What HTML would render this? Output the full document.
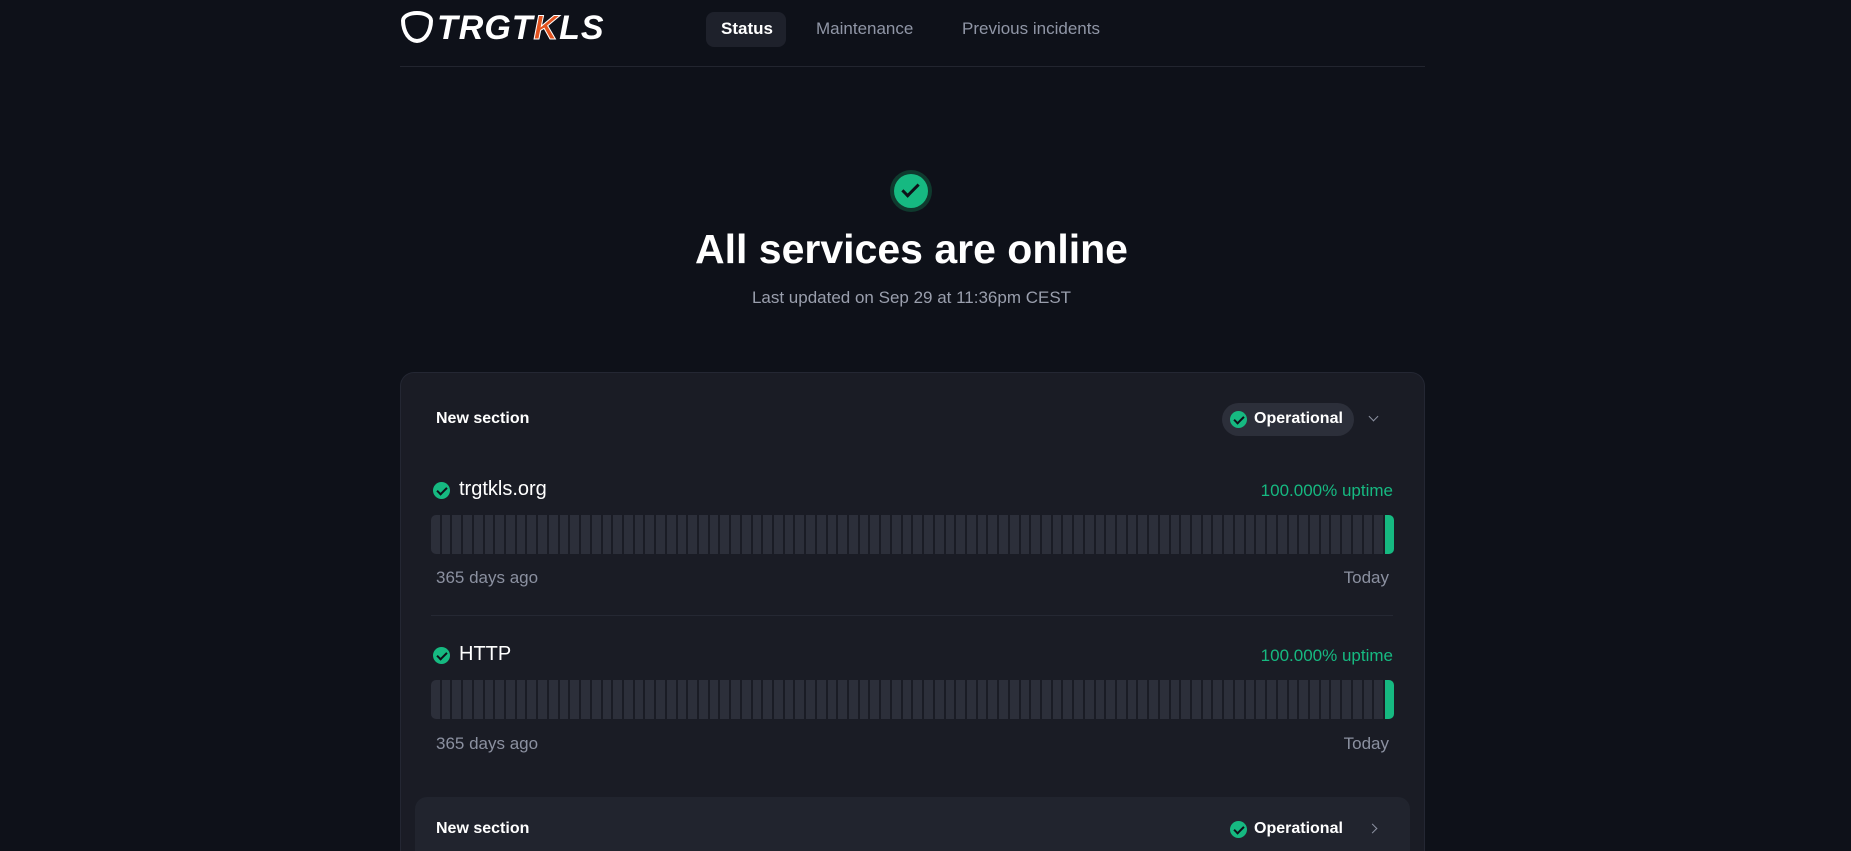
<!DOCTYPE html>
<html><head><meta charset="utf-8"><style>
*{box-sizing:border-box;margin:0;padding:0}
html,body{width:1851px;height:851px;overflow:hidden}
body{background:#0e1119;font-family:"Liberation Sans",sans-serif;color:#fff;position:relative}
.abs{position:absolute}
.nav a{position:absolute;font-size:17px;color:#9096a6;top:19px}
.pill{left:706px;top:12px;width:80px;height:35px;background:#1e212b;border-radius:8px}
.line{left:400px;top:66px;width:1025px;height:1px;background:#22252f}
.card{left:400px;top:372px;width:1025px;height:479px;background:#1a1c25;border:1px solid #242733;border-bottom:none;border-radius:14px 14px 0 0}
.bar{position:absolute;left:431px;width:962px;height:39px;display:flex;gap:2px}
.bar i{flex:1;background:#2c2f3a}
.bar i:first-child{border-radius:5px 0 0 5px}
.bar i:last-child{background:#16b981;border-radius:0 5px 5px 0}
.gray{color:#8b90a0;font-size:17px}
.green{color:#16b981;font-size:17px}
.ic{position:absolute;width:17px;height:17px;border-radius:50%;background:#16b981}
.ic::after{content:"";position:absolute;left:5.5px;top:3px;width:4px;height:8px;border:solid #0e1119;border-width:0 2px 2px 0;transform:rotate(45deg)}
</style></head><body>
<div class="abs" style="left:401px;top:9px;font:italic 900 34px 'Liberation Sans',sans-serif;letter-spacing:1px;color:#fff;white-space:nowrap">
<span style="display:inline-block;width:32px;height:32px;border:4px solid #fff;border-radius:50% 50% 50% 50%/30% 30% 70% 70%;vertical-align:-4px;margin-right:4px"></span>TRGT<span style="color:#e2531f;-webkit-text-stroke:1px #fff">K</span>LS</div>
<div class="abs pill"></div>
<div class="nav"><a style="left:721px;color:#fff;font-weight:bold">Status</a><a style="left:816px">Maintenance</a><a style="left:962px">Previous incidents</a></div>
<div class="abs line"></div>
<div class="abs" style="left:890px;top:170px;width:42px;height:42px;border-radius:50%;background:#0f3a2e"></div>
<div class="abs" style="left:894px;top:174px;width:34px;height:34px;border-radius:50%;background:#16b981"></div>
<div class="abs" style="left:906px;top:180px;width:9px;height:17px;border:solid #0e1119;border-width:0 3px 3px 0;transform:rotate(45deg)"></div>
<div class="abs" style="left:0;width:1823px;top:226px;text-align:center;font-size:41px;font-weight:bold">All services are online</div>
<div class="abs" style="left:0;width:1823px;top:288px;text-align:center;color:#9a9fad;font-size:17px">Last updated on Sep 29 at 11:36pm CEST</div>
<div class="abs card"></div>
<div class="abs" style="left:436px;top:410px;font-size:16px;font-weight:bold">New section</div>
<div class="abs" style="left:1222px;top:403px;width:132px;height:33px;border-radius:17px;background:#2c2f3a"></div>
<div class="ic" style="left:1230px;top:411px"></div>
<div class="abs" style="left:1254px;top:410px;font-size:16px;font-weight:bold">Operational</div>
<div class="abs" style="left:1370px;top:413px;width:7px;height:7px;border:solid #8b90a0;border-width:0 1.5px 1.5px 0;transform:rotate(45deg)"></div>
<div class="ic" style="left:433px;top:482px"></div>
<div class="abs" style="left:459px;top:478px;font-size:20px">trgtkls.org</div>
<div class="abs green" style="left:1200px;width:193px;text-align:right;top:481px">100.000% uptime</div>
<div class="bar" style="top:515px"><i></i><i></i><i></i><i></i><i></i><i></i><i></i><i></i><i></i><i></i><i></i><i></i><i></i><i></i><i></i><i></i><i></i><i></i><i></i><i></i><i></i><i></i><i></i><i></i><i></i><i></i><i></i><i></i><i></i><i></i><i></i><i></i><i></i><i></i><i></i><i></i><i></i><i></i><i></i><i></i><i></i><i></i><i></i><i></i><i></i><i></i><i></i><i></i><i></i><i></i><i></i><i></i><i></i><i></i><i></i><i></i><i></i><i></i><i></i><i></i><i></i><i></i><i></i><i></i><i></i><i></i><i></i><i></i><i></i><i></i><i></i><i></i><i></i><i></i><i></i><i></i><i></i><i></i><i></i><i></i><i></i><i></i><i></i><i></i><i></i><i></i><i></i><i></i><i></i><i></i></div>
<div class="abs gray" style="left:436px;top:568px">365 days ago</div>
<div class="abs gray" style="left:1200px;width:189px;text-align:right;top:568px">Today</div>
<div class="abs" style="left:431px;top:615px;width:962px;height:1px;background:#252833"></div>
<div class="ic" style="left:433px;top:647px"></div>
<div class="abs" style="left:459px;top:643px;font-size:20px">HTTP</div>
<div class="abs green" style="left:1200px;width:193px;text-align:right;top:646px">100.000% uptime</div>
<div class="bar" style="top:680px"><i></i><i></i><i></i><i></i><i></i><i></i><i></i><i></i><i></i><i></i><i></i><i></i><i></i><i></i><i></i><i></i><i></i><i></i><i></i><i></i><i></i><i></i><i></i><i></i><i></i><i></i><i></i><i></i><i></i><i></i><i></i><i></i><i></i><i></i><i></i><i></i><i></i><i></i><i></i><i></i><i></i><i></i><i></i><i></i><i></i><i></i><i></i><i></i><i></i><i></i><i></i><i></i><i></i><i></i><i></i><i></i><i></i><i></i><i></i><i></i><i></i><i></i><i></i><i></i><i></i><i></i><i></i><i></i><i></i><i></i><i></i><i></i><i></i><i></i><i></i><i></i><i></i><i></i><i></i><i></i><i></i><i></i><i></i><i></i><i></i><i></i><i></i><i></i><i></i><i></i></div>
<div class="abs gray" style="left:436px;top:734px">365 days ago</div>
<div class="abs gray" style="left:1200px;width:189px;text-align:right;top:734px">Today</div>
<div class="abs" style="left:415px;top:797px;width:995px;height:54px;background:#21242e;border-radius:12px 12px 0 0"></div>
<div class="ic" style="left:1230px;top:821px"></div>
<div class="abs" style="left:436px;top:820px;font-size:16px;font-weight:bold">New section</div>
<div class="abs" style="left:1254px;top:820px;font-size:16px;font-weight:bold">Operational</div>
<div class="abs" style="left:1369px;top:825px;width:7px;height:7px;border:solid #8b90a0;border-width:1.5px 1.5px 0 0;transform:rotate(45deg)"></div>
</body></html>
